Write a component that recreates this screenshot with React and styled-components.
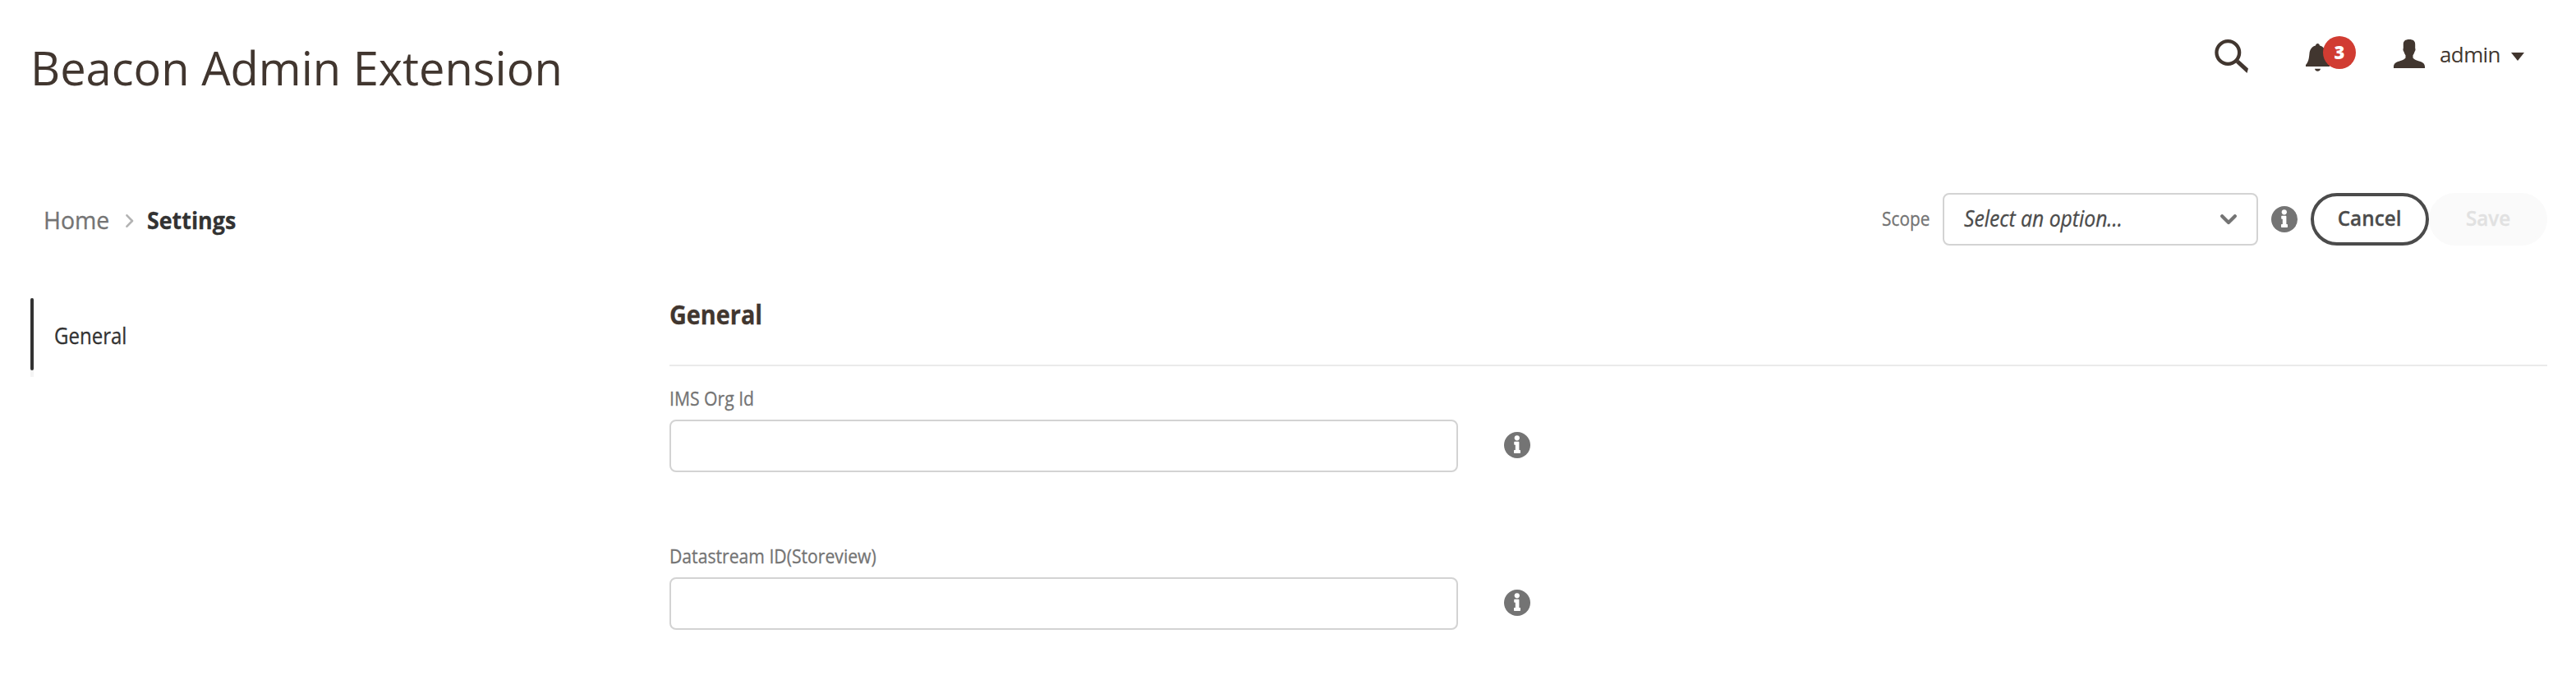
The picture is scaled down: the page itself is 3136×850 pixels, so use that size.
import React from 'react';
import styled, { createGlobalStyle } from 'styled-components';

const GlobalStyle = createGlobalStyle`
  * { box-sizing: border-box; }
  body { margin: 0; background: #fff; font-family: 'Open Sans', 'Noto Sans', sans-serif; }
`;

const Page = styled.div`
  width: 100%;
  height: 850px;
  padding: 0 35px 0 37px;
`;

const Narrow = styled.span`
  display: inline-block;
  transform: scaleX(${(p) => p.$by});
  transform-origin: ${(p) => p.$from || 'left'} center;
  -webkit-text-stroke: 0.3px currentColor;
`;

const Header = styled.header`
  display: flex;
  justify-content: space-between;
  align-items: flex-start;
  height: 235px;
`;

const Title = styled.h1`
  margin: 43px 0 0;
  font-size: 56px;
  font-weight: 400;
  line-height: 78px;
  color: #41362f;
  white-space: nowrap;
`;

const HeaderTools = styled.div`
  display: flex;
  align-items: flex-start;
  height: 48px;
  margin: 44px 28px 0 0;
  color: #41362f;
  svg { display: block; fill: currentColor; }
`;

const SearchButton = styled.div`
  width: 41px;
  margin: 4px 70px 0 0;
`;

const Notifications = styled.div`
  position: relative;
  width: 61px;
  margin-right: 46px;
  padding-top: 9px;
`;

const Badge = styled.span`
  position: absolute;
  top: 0;
  right: 0;
  width: 40px;
  height: 40px;
  border-radius: 50%;
  background: #d13c32;
  color: #fff;
  font-size: 22px;
  font-weight: 800;
  line-height: 38px;
  text-align: center;
`;

const Account = styled.div`
  display: flex;
  align-items: flex-start;
  padding-top: 4px;
`;

const AccountName = styled.span`
  width: 74px;
  margin: 0 13px 0 18px;
  font-size: 26px;
  line-height: 36px;
  letter-spacing: -0.6px;
  white-space: nowrap;
`;

const CaretIcon = styled.svg`
  margin-top: 16px;
`;

const Toolbar = styled.div`
  display: flex;
  align-items: center;
  justify-content: space-between;
  height: 64px;
`;

const Breadcrumbs = styled.nav`
  display: flex;
  align-items: center;
  padding-left: 16px;
  font-size: 29px;
  line-height: 40px;
  white-space: nowrap;
`;

const Crumb = styled.span`
  width: ${(p) => p.$width}px;
  padding-top: 2px;
  color: ${(p) => (p.$current ? '#323232' : '#747474')};
  font-weight: ${(p) => (p.$current ? 700 : 400)};
`;

const CrumbArrow = styled.svg`
  margin: 4px 16px 0 17px;
`;

const Actions = styled.div`
  display: flex;
  align-items: center;
`;

const ScopeLabel = styled.span`
  width: 74px;
  padding-bottom: 2px;
  color: #747474;
  font-size: 23px;
  line-height: 32px;
  white-space: nowrap;
`;

const Select = styled.div`
  display: flex;
  align-items: center;
  justify-content: space-between;
  width: 384px;
  height: 64px;
  margin-right: 16px;
  padding: 0 24px;
  border: 2px solid #d3d3d3;
  border-radius: 8px;
  color: #4b4b4b;
  font-size: 27px;
  font-style: italic;
  white-space: nowrap;
`;

const SelectValue = styled.span`
  padding-bottom: 3px;
`;

const Button = styled.button`
  width: 144px;
  height: 64px;
  margin-left: ${(p) => p.$gap || 0}px;
  padding: 0 0 4px;
  border: 4px solid ${(p) => (p.disabled ? '#fafafa' : '#4b4b4b')};
  border-radius: 32px;
  background: ${(p) => (p.disabled ? '#fafafa' : '#fff')};
  color: ${(p) => (p.disabled ? '#e1e1e1' : '#4b4b4b')};
  font-family: inherit;
  font-size: 26px;
  font-weight: 600;
`;

const Body = styled.div`
  display: flex;
  align-items: flex-start;
`;

const SideNav = styled.nav`
  width: 778px;
  margin-top: 64px;
`;

const NavItem = styled.div`
  display: flex;
  height: 96px;
  color: #323232;
  font-size: 27px;
  line-height: 91px;
`;

const NavMarker = styled.span`
  width: 4px;
  margin-right: 25px;
  background: #f4f4f4;
  &::before {
    content: '';
    display: block;
    height: 88px;
    border-radius: 2px;
    background: #323232;
  }
`;

const Content = styled.main`
  flex: 1;
`;

const SectionTitle = styled.h2`
  height: 147px;
  margin: 0 0 29px;
  padding-top: 62px;
  border-bottom: 2px solid #eaeaea;
  color: #41362f;
  font-size: 32px;
  font-weight: 700;
  line-height: 44px;
`;

const Field = styled.div`
  height: 192px;
`;

const FieldLabel = styled.label`
  display: block;
  height: 36px;
  color: #747474;
  font-size: 23px;
  line-height: 20px;
  white-space: nowrap;
`;

const FieldRow = styled.div`
  display: flex;
  align-items: center;
  gap: 56px;
`;

const Input = styled.input`
  width: 960px;
  height: 64px;
  padding: 0 22px;
  border: 2px solid #d3d3d3;
  border-radius: 8px;
  background: #fff;
  font: inherit;
`;

const InfoSvg = styled.svg`
  display: block;
  flex: none;
  margin-bottom: ${(p) => p.$lift || 0}px;
`;

const InfoIcon = ({ lift }) => (
  <InfoSvg $lift={lift} width="32" height="32" viewBox="0 0 32 32">
    <circle cx="16" cy="16" r="16" fill="#747474" />
    <circle cx="15.8" cy="7.3" r="3.1" fill="#fff" />
    <path fill="#fff" d="M13.2 11.8h4.2c.6 0 1 .4 1 1v9.300h.6c.6 0 1 .4 1 1v2c0 .6-.4 1-1 1h-6c-.6 0-1-.4-1-1v-2c0-.6.4-1 1-1h.8v-6.300h-.6c-.6 0-1-.4-1-1v-2c0-.6.4-1 1-1z" />
  </InfoSvg>
);

const SettingField = ({ id, label }) => (
  <Field>
    <FieldLabel htmlFor={id}><Narrow $by={0.92}>{label}</Narrow></FieldLabel>
    <FieldRow>
      <Input id={id} />
      <InfoIcon lift={2} />
    </FieldRow>
  </Field>
);

export default function App() {
  return (
    <>
      <GlobalStyle />
      <Page>
        <Header>
          <Title>Beacon Admin Extension</Title>
          <HeaderTools>
            <SearchButton>
              <svg width="41" height="41" viewBox="0 0 41 41">
                <path fillRule="evenodd" d="M16.300 0a16 16 0 1 0 0 32 16 16 0 0 0 0-32zm0 4.300a11.700 11.700 0 1 1 0 23.400 11.700 11.700 0 0 1 0-23.400z" />
                <path d="M26 28.500l3.500-3.500L41 35.500 39.500 41z" />
              </svg>
            </SearchButton>
            <Notifications>
              <svg width="29" height="34" viewBox="0 0 29 34">
                <path d="M14.500 0c1.300 0 2.300 1 2.500 2.400 4.600 1.200 7 4.800 7.500 9.600.6 6.600 1.300 10.500 4.500 14v2H0v-2c3.200-3.500 3.900-7.400 4.500-14C5 7.200 7.400 3.600 12 2.400 12.200 1 13.200 0 14.500 0zM11 30.700h7c-.3 2-1.700 3-3.500 3s-3.200-1-3.500-3z" />
              </svg>
              <Badge>3</Badge>
            </Notifications>
            <Account>
              <svg width="38" height="35" viewBox="0 0 38 35">
                <path d="M19 0c4.800 0 7.500 2 7.200 6.500v4.300c.6 1 .4 3-.7 4.200-.5 1.800-1 3-2 4.200v3.300c2 2.300 4.300 3 7.500 4 4.500 1.300 7 3 7 7V35H0v-1.500c0-4 2.500-5.700 7-7 3.200-1 5.500-1.700 7.500-4v-3.300c-1-1.200-1.500-2.400-2-4.200-1.100-1.200-1.300-3.200-.7-4.200V6.500C11.500 2 14.200 0 19 0z" />
              </svg>
              <AccountName>admin</AccountName>
              <CaretIcon width="16" height="10" viewBox="0 0 16 10"><path d="M0 0h16L8 10z" /></CaretIcon>
            </Account>
          </HeaderTools>
        </Header>
        <Toolbar>
          <Breadcrumbs>
            <Crumb $width={83}><Narrow $by={0.98}>Home</Narrow></Crumb>
            <CrumbArrow width="10" height="16" viewBox="0 0 10 16">
              <path d="M1.500 1.300L8 8l-6.500 6.700" fill="none" stroke="#b3b3b3" strokeWidth="2.600" strokeLinecap="round" strokeLinejoin="round" />
            </CrumbArrow>
            <Crumb $current><Narrow $by={0.925}>Settings</Narrow></Crumb>
          </Breadcrumbs>
          <Actions>
            <ScopeLabel><Narrow $by={0.905}>Scope</Narrow></ScopeLabel>
            <Select>
              <SelectValue><Narrow $by={0.915}>Select an option...</Narrow></SelectValue>
              <svg width="20" height="13" viewBox="0 0 20 13">
                <path d="M2.200 2.200l7.800 7.800 7.800-7.800" fill="none" stroke="#747474" strokeWidth="4.200" strokeLinecap="round" strokeLinejoin="round" />
              </svg>
            </Select>
            <InfoIcon />
            <Button $gap={16}><Narrow $by={0.935} $from="center">Cancel</Narrow></Button>
            <Button disabled><Narrow $by={0.93} $from="center">Save</Narrow></Button>
          </Actions>
        </Toolbar>
        <Body>
          <SideNav>
            <NavItem><NavMarker /><Narrow $by={0.89}>General</Narrow></NavItem>
          </SideNav>
          <Content>
            <SectionTitle><Narrow $by={0.9}>General</Narrow></SectionTitle>
            <SettingField id="ims-org" label="IMS Org Id" />
            <SettingField id="datastream" label="Datastream ID(Storeview)" />
          </Content>
        </Body>
      </Page>
    </>
  );
}
